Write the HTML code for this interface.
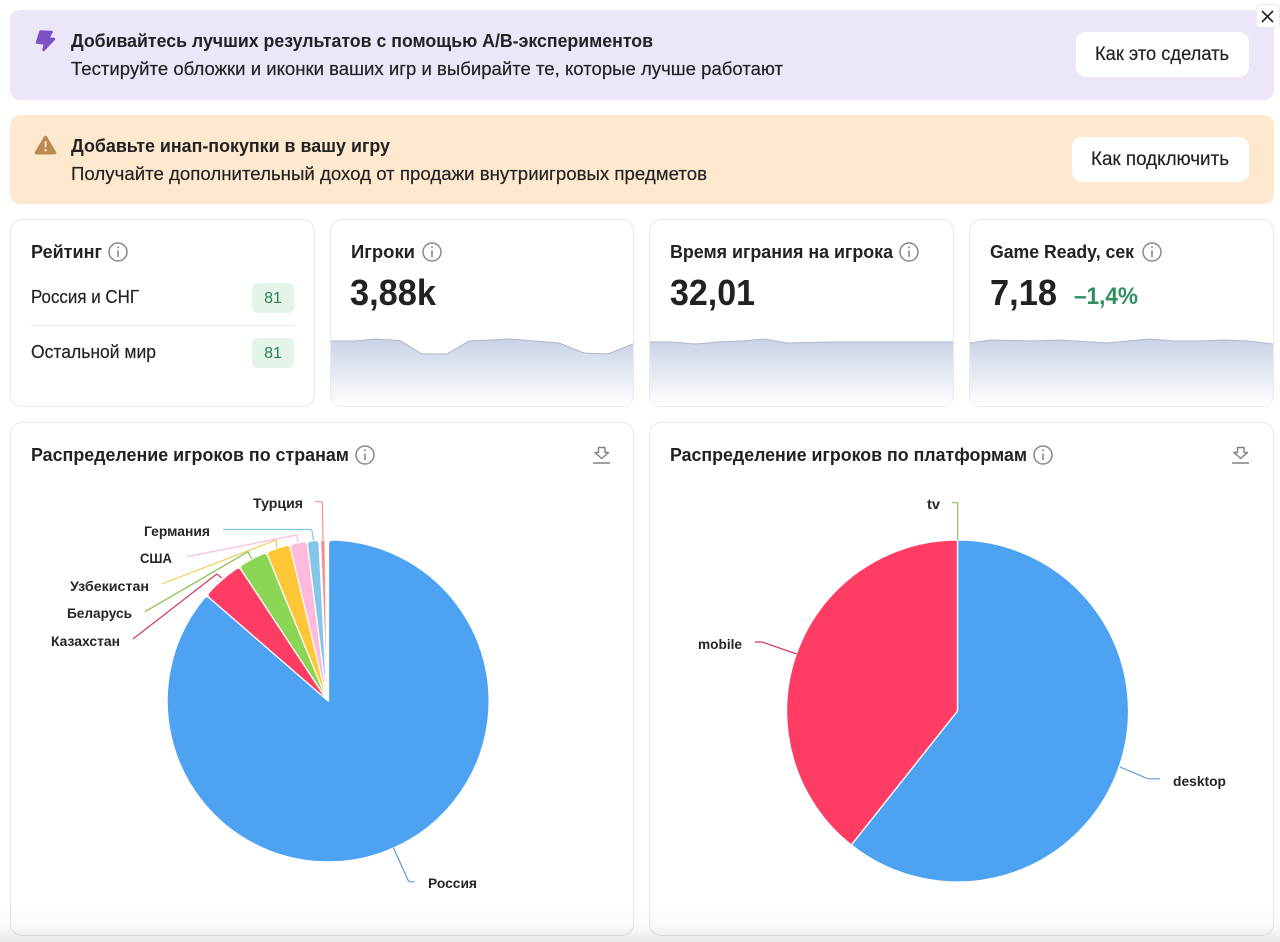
<!DOCTYPE html>
<html lang="ru">
<head>
<meta charset="utf-8">
<title>Dashboard</title>
<style>
html,body{margin:0;padding:0;background:#fff;width:1280px;height:942px;overflow:hidden}
body{position:relative;font-family:"Liberation Sans","Noto Sans CJK SC",sans-serif}
.b{position:absolute;box-sizing:border-box}
.banner{left:10px;width:1264px;border-radius:10px}
.btn{background:#fff;border-radius:10px}
.card{background:#fff;border:1px solid #e9e9e9;border-radius:12px}
.badge{background:#e3f4e8;border-radius:6px;left:252px;width:42px;height:30px}
svg{position:absolute;left:0;top:0}
text{fill:#222;font-family:"Liberation Sans","Noto Sans CJK SC",sans-serif}
.h{font-weight:700;font-size:18px}
.r{font-size:18px;stroke:#222;stroke-width:.18}
.l{font-weight:700;font-size:14px;fill:#262626}
.n{font-weight:700;font-size:36px}
.i circle{fill:none;stroke:#888;stroke-width:1.5}
.i path{fill:none;stroke:#888;stroke-width:1.6}
.d path{fill:none;stroke:#808080;stroke-width:1.4;stroke-linejoin:round}
.c{fill:none;stroke-width:1.2}
.p path{stroke:#fff;stroke-width:1.3;stroke-linejoin:round}
</style>
</head>
<body>
<div class="b banner" style="top:10px;height:90px;background:#ede5f8"></div>
<div class="b banner" style="top:115px;height:89px;background:#fee9cf"></div>
<div class="b btn" style="left:1076px;top:32px;width:173px;height:45px"></div>
<div class="b btn" style="left:1072px;top:137px;width:177px;height:45px"></div>
<div class="b" style="left:1256px;top:4px;width:24px;height:24px;background:#fff;border:1px solid #ececec;border-radius:4px"></div>

<div class="b card" style="left:10px;top:219px;width:305px;height:188px"></div>
<div class="b card" style="left:330px;top:219px;width:304px;height:188px"></div>
<div class="b card" style="left:649px;top:219px;width:305px;height:188px"></div>
<div class="b card" style="left:969px;top:219px;width:305px;height:188px"></div>
<div class="b card" style="left:10px;top:422px;width:624px;height:514px"></div>
<div class="b card" style="left:649px;top:422px;width:625px;height:514px"></div>
<div class="b badge" style="top:283px"></div>
<div class="b badge" style="top:338px"></div>
<div class="b" style="left:31px;top:325px;width:263px;height:1px;background:#ebebeb"></div>

<svg width="1280" height="942" viewBox="0 0 1280 942">
<defs>
<linearGradient id="g" x1="0" y1="0" x2="0" y2="1">
<stop offset="0" stop-color="#c9d2e6"/><stop offset="1" stop-color="#ffffff"/>
</linearGradient>
</defs>

<!-- banners -->
<path d="M40.500 31.500L51.500 32 48 38.500 54 39 43.500 50 45 43.500 37 42.500Z" fill="#7b50c4" stroke="#7b50c4" stroke-width="2.500" stroke-linejoin="round"/>
<path d="M45.500 137.500L54.500 152.800H36.500Z" fill="#b98b50" stroke="#b98b50" stroke-width="3.500" stroke-linejoin="round"/>
<rect x="44.600" y="141" width="2" height="6.500" rx="1" fill="#f6e2c6"/>
<circle cx="45.600" cy="150.300" r="1.300" fill="#f6e2c6"/>
<text class="h" x="71" y="47" textLength="582" lengthAdjust="spacingAndGlyphs">Добивайтесь лучших результатов с помощью A/B-экспериментов</text>
<text class="r" x="71" y="75" textLength="712" lengthAdjust="spacingAndGlyphs">Тестируйте обложки и иконки ваших игр и выбирайте те, которые лучше работают</text>
<text class="r" x="1095" y="60" textLength="134" lengthAdjust="spacingAndGlyphs" style="font-size:19px">Как это сделать</text>
<text class="h" x="71" y="152" textLength="319" lengthAdjust="spacingAndGlyphs">Добавьте инап-покупки в вашу игру</text>
<text class="r" x="71" y="180" textLength="636" lengthAdjust="spacingAndGlyphs">Получайте дополнительный доход от продажи внутриигровых предметов</text>
<text class="r" x="1091" y="165" textLength="138" lengthAdjust="spacingAndGlyphs" style="font-size:19px">Как подключить</text>
<path d="M1262 11l11 11M1273 11l-11 11" stroke="#222" stroke-width="1.600" fill="none"/>

<!-- sparklines -->
<path d="M331 341L355 341 375 339 400 340.500 422 354 447 354 469 341 490 340 510 339 535 341 559 343 584 353 608 354 633 344V394Q633 406 621 406H343Q331 406 331 394Z" fill="url(#g)"/>
<path d="M331 341L355 341 375 339 400 340.500 422 354 447 354 469 341 490 340 510 339 535 341 559 343 584 353 608 354 633 344" fill="none" stroke="#b0b6c8" stroke-width="1"/>
<path d="M650 342L671 342 695 344 718 342 742 341 764.500 339 787 343 832 342 873 342 926 342 953 342V394Q953 406 941 406H662Q650 406 650 394Z" fill="url(#g)"/>
<path d="M650 342L671 342 695 344 718 342 742 341 764.500 339 787 343 832 342 873 342 926 342 953 342" fill="none" stroke="#b0b6c8" stroke-width="1"/>
<path d="M970 343L991 340 1032 341 1060 340 1107 343 1150 339 1175 341 1199 341 1224 340 1248 341 1273 344V394Q1273 406 1261 406H982Q970 406 970 394Z" fill="url(#g)"/>
<path d="M970 343L991 340 1032 341 1060 340 1107 343 1150 339 1175 341 1199 341 1224 340 1248 341 1273 344" fill="none" stroke="#b0b6c8" stroke-width="1"/>

<!-- stat cards -->
<text class="h" x="31" y="258" textLength="71" lengthAdjust="spacingAndGlyphs">Рейтинг</text>
<text class="r" x="31" y="303" textLength="108" lengthAdjust="spacingAndGlyphs">Россия и СНГ</text>
<text class="r" x="31" y="358" textLength="125" lengthAdjust="spacingAndGlyphs">Остальной мир</text>
<text x="273" y="303" text-anchor="middle" style="font-size:16px;fill:#2f7d57">81</text>
<text x="273" y="358" text-anchor="middle" style="font-size:16px;fill:#2f7d57">81</text>
<text class="h" x="351" y="258" textLength="64" lengthAdjust="spacingAndGlyphs">Игроки</text>
<text class="n" x="350" y="305" textLength="86" lengthAdjust="spacingAndGlyphs">3,88k</text>
<text class="h" x="670" y="258" textLength="223" lengthAdjust="spacingAndGlyphs">Время играния на игрока</text>
<text class="n" x="670" y="305" textLength="85" lengthAdjust="spacingAndGlyphs">32,01</text>
<text class="h" x="990" y="258" textLength="144" lengthAdjust="spacingAndGlyphs">Game Ready, сек</text>
<text class="n" x="990" y="305" textLength="67" lengthAdjust="spacingAndGlyphs">7,18</text>
<text x="1074" y="304" textLength="64" lengthAdjust="spacingAndGlyphs" style="font-weight:700;font-size:24px;fill:#2f8f60">–1,4%</text>

<g class="i"><circle cx="118" cy="252" r="9"/><path d="M118 250.500v6.500M118 246.500v1.800"/></g>
<g class="i"><circle cx="432" cy="252" r="9"/><path d="M432 250.500v6.500M432 246.500v1.800"/></g>
<g class="i"><circle cx="909" cy="252" r="9"/><path d="M909 250.500v6.500M909 246.500v1.800"/></g>
<g class="i"><circle cx="1152" cy="252" r="9"/><path d="M1152 250.500v6.500M1152 246.500v1.800"/></g>

<!-- chart headers -->
<text class="h" x="31" y="461" textLength="318" lengthAdjust="spacingAndGlyphs">Распределение игроков по странам</text>
<g class="i"><circle cx="365" cy="455" r="9"/><path d="M365 453.500v6.500M365 449.500v1.800"/></g>
<g class="d"><path d="M598.500 447.500h6.500v5h3.500l-6.800 6-6.800-6h3.600z"/><path d="M593 463h17"/></g>
<text class="h" x="670" y="461" textLength="357" lengthAdjust="spacingAndGlyphs">Распределение игроков по платформам</text>
<g class="i"><circle cx="1043" cy="455" r="9"/><path d="M1043 453.500v6.500M1043 449.500v1.800"/></g>
<g class="d"><path d="M1237.500 447.500h6.500v5h3.500l-6.800 6-6.800-6h3.600z"/><path d="M1232 463h17"/></g>

<!-- pie 1 -->
<g class="p">
<path d="M328.500 701V544Q328.500 540 332.500 540A161 161 0 1 1 204 598.400Q206.500 595.400 209.500 598Z" fill="#4da2f1"/>
<path d="M327 700L209.500 598Q206.500 595.400 209.100 592.400A161 161 0 0 1 235.900 569Q239.100 566.800 241.400 570.100Z" fill="#ff3d64"/>
<path d="M327 700L241.400 570.100Q239.100 566.800 242.400 564.600A161 161 0 0 1 262.800 553.800Q266.400 552.300 267.900 556Z" fill="#8ad554"/>
<path d="M327 700L267.900 556Q266.400 552.300 270 550.800A161 161 0 0 1 285.800 545.600Q289.600 544.600 290.600 548.500Z" fill="#ffc636"/>
<path d="M327 700L290.600 548.500Q289.600 544.600 293.400 543.800A161 161 0 0 1 303.100 541.900Q307 541.400 307.500 545.300Z" fill="#ffb9dd"/>
<path d="M327 700L307.500 545.300Q307 541.400 310.900 540.900A161 161 0 0 1 315.100 540.500Q319 540.300 319.200 544.300Z" fill="#84c6e8"/>
<path d="M327 700L320.400 540.200A161 161 0 0 1 325.200 540Z" fill="#f2919e"/>
</g>
<path class="c" d="M315 501.700h5.500q1.800 0 1.900 1.800L323 540" stroke="#f2919e"/>
<path class="c" d="M223 529.500h87q1.800 0 2 1.500l1.500 9" stroke="#84c6e8"/>
<path class="c" d="M186.700 556.700L296.700 535l1.300 7" stroke="#ffb9dd"/>
<path class="c" d="M161.700 584L276 540l1 8" stroke="#f2cc4d"/>
<path class="c" d="M145 611.700L248 551.700l3.700 7.300" stroke="#8ac24c"/>
<path class="c" d="M133 639L216.700 574l5 4" stroke="#d0365f"/>
<path class="c" d="M393.500 848L408 880q.8 1.800 2.500 1.800h4" stroke="#5f9bcf"/>
<text class="l" x="253" y="508" textLength="50" lengthAdjust="spacingAndGlyphs">Турция</text>
<text class="l" x="144" y="536" textLength="66" lengthAdjust="spacingAndGlyphs">Германия</text>
<text class="l" x="140" y="563" textLength="32" lengthAdjust="spacingAndGlyphs">США</text>
<text class="l" x="70" y="591" textLength="79" lengthAdjust="spacingAndGlyphs">Узбекистан</text>
<text class="l" x="67" y="618" textLength="65" lengthAdjust="spacingAndGlyphs">Беларусь</text>
<text class="l" x="51" y="646" textLength="69" lengthAdjust="spacingAndGlyphs">Казахстан</text>
<text class="l" x="428" y="888" textLength="49" lengthAdjust="spacingAndGlyphs">Россия</text>

<!-- pie 2 -->
<g class="p">
<path d="M957.500 711V540A171 171 0 1 1 851.300 845Z" fill="#4da2f1"/>
<path d="M957.500 711L851.300 845A171 171 0 0 1 957.500 540Z" fill="#ff3d64"/>
</g>
<path class="c" d="M951.700 502.700h6v37.300" stroke="#8ac24c"/>
<path class="c" d="M755 642h5q2 0 4 .7L796.700 654" stroke="#d0365f"/>
<path class="c" d="M1120 767l26 11q2 .8 4 .8h10" stroke="#5f9bcf"/>
<text class="l" x="927" y="509" textLength="13" lengthAdjust="spacingAndGlyphs">tv</text>
<text class="l" x="698" y="649" textLength="44" lengthAdjust="spacingAndGlyphs">mobile</text>
<text class="l" x="1173" y="786" textLength="53" lengthAdjust="spacingAndGlyphs">desktop</text>
</svg>

<div class="b" style="left:0;top:900px;width:1280px;height:42px;background:linear-gradient(to bottom,rgba(0,0,0,0),rgba(0,0,0,.02) 60%,rgba(0,0,0,.085));pointer-events:none"></div>
</body>
</html>
